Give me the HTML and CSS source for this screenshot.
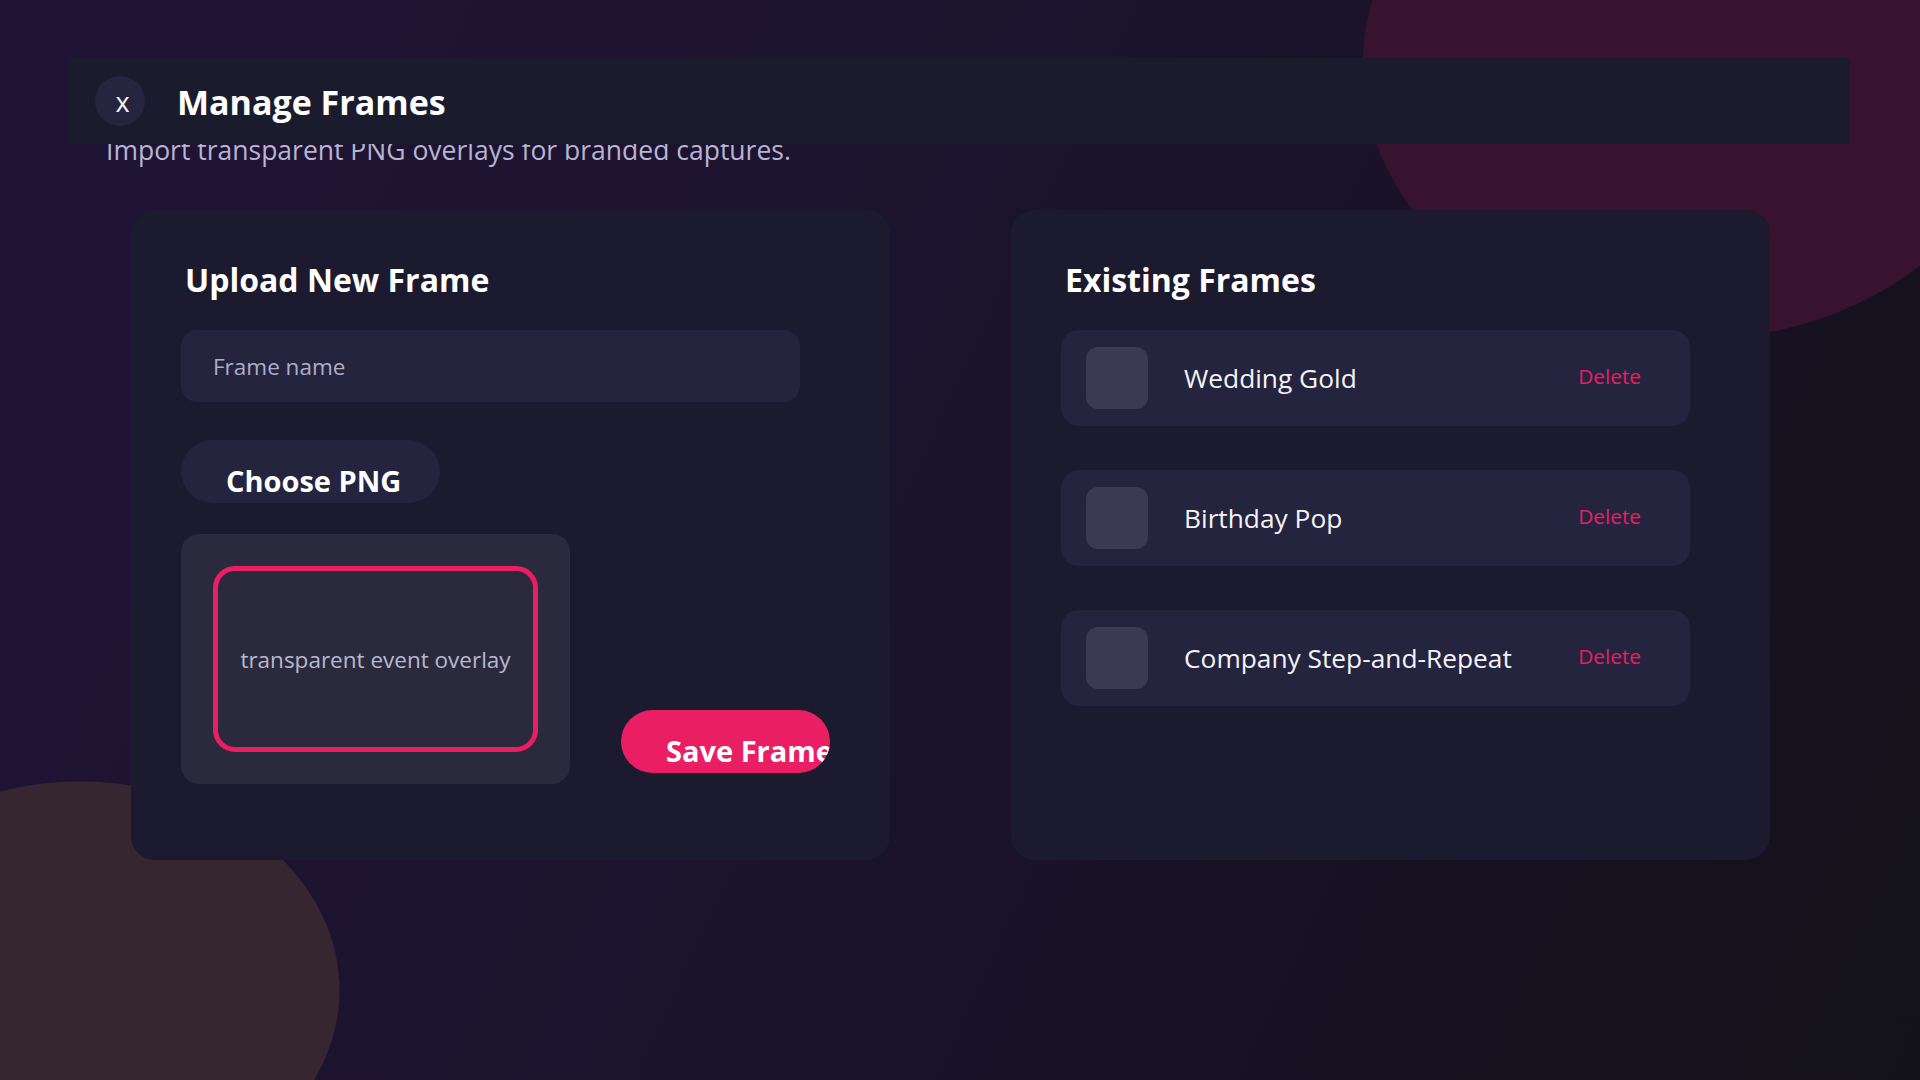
FILE: index.html
```html
<!DOCTYPE html>
<html lang="en">
<head>
    <meta charset="UTF-8">
    <meta name="viewport" content="width=device-width, initial-scale=1.0">
    <title>Manage Frames</title>
    <link rel="stylesheet" href="styles.css">
</head>
<body>

    <div class="page">
        <!-- Top bar -->
        <header class="topbar">
            <button class="close-btn">x</button>
            <h1>Manage Frames</h1>
        </header>
        <p class="subtitle">Import transparent PNG overlays for branded captures.</p>

        <div class="panels">
            <!-- Upload form -->
            <section class="panel">
                <h2>Upload New Frame</h2>
                <input class="name-input" type="text" placeholder="Frame name">
                <button class="choose-btn">Choose PNG</button>
                <div class="preview-row">
                    <div class="preview">
                        <div class="preview-inner">transparent event overlay</div>
                    </div>
                    <button class="save-btn">Save Frame</button>
                </div>
            </section>

            <!-- Existing frames list -->
            <section class="panel">
                <h2>Existing Frames</h2>
                <ul class="frame-list">
                    <li class="frame-item">
                        <span class="thumb"></span>
                        <span class="frame-name">Wedding Gold</span>
                        <button class="delete-btn">Delete</button>
                    </li>
                    <li class="frame-item">
                        <span class="thumb"></span>
                        <span class="frame-name">Birthday Pop</span>
                        <button class="delete-btn">Delete</button>
                    </li>
                    <li class="frame-item">
                        <span class="thumb"></span>
                        <span class="frame-name">Company Step-and-Repeat</span>
                        <button class="delete-btn">Delete</button>
                    </li>
                </ul>
            </section>
        </div>
    </div>

</body>
</html>
```

FILE: styles.css
```css
body {
    font-family: "Open Sans", "Noto Sans", sans-serif;
    margin: 0;
    height: 100vh;
    overflow: hidden;
    color: #ffffff;
    background-color: #1a1229;
    /* decorative blobs + base gradient */
    background-image:
        radial-gradient(332px 275px at 1694px 65px, #38132f 99.5%, rgba(56, 19, 47, 0) 100%),
        radial-gradient(260px 209px at 80px 990px, #352630 99.5%, rgba(53, 38, 48, 0) 100%),
        linear-gradient(115deg, #201435 0%, #1b132c 50%, #131119 100%);
}

.page {
    padding: 58px 70px 0;
}

/* Top bar */
.topbar {
    position: relative;
    z-index: 1;
    height: 86px;
    background-color: #1b1b2e;
    display: flex;
    align-items: center;
    padding-left: 25px;
}

.close-btn {
    width: 50px;
    height: 50px;
    border-radius: 50%;
    border: none;
    background-color: #26253f;
    color: #f2f2f7;
    font-family: inherit;
    font-size: 27px;
    line-height: 1;
    padding: 0 0 0 5px;
    cursor: pointer;
}

.topbar h1 {
    margin: 2px 0 0 32px;
    font-size: 34px;
    font-weight: 700;
}

.subtitle {
    margin: -12px 0 0 36px;
    font-size: 26.5px;
    color: #b6b6d2;
}

/* Panels */
.panels {
    display: grid;
    grid-template-columns: 759px 759px;
    gap: 121px;
    margin: 42px 0 0 61px;
}

.panel {
    height: 650px;
    box-sizing: border-box;
    background-color: #1b1a2e;
    border-radius: 24px;
    padding: 48px 50px 0;
}

.panel h2 {
    margin: 0 0 29px;
    padding-left: 4px;
    font-size: 32px;
    font-weight: 700;
}

.name-input {
    display: block;
    width: 619px;
    height: 72px;
    box-sizing: border-box;
    border: none;
    border-radius: 16px;
    background-color: #25243f;
    padding: 0 32px;
    font-family: inherit;
    font-size: 22.5px;
    color: #ffffff;
    outline: none;
}

.name-input::placeholder {
    color: #aeaec8;
}

.choose-btn, .save-btn {
    display: block;
    height: 63px;
    box-sizing: border-box;
    border: none;
    border-radius: 32px;
    padding: 18px 0 0 45px;
    text-align: left;
    white-space: nowrap;
    overflow: hidden;
    font-family: inherit;
    font-size: 29px;
    font-weight: 700;
    line-height: normal;
    color: #ffffff;
    cursor: pointer;
}

.choose-btn {
    width: 259px;
    margin-top: 38px;
    background-color: #25243f;
}

.preview-row {
    display: flex;
    align-items: flex-end;
    gap: 51px;
    margin-top: 31px;
}

.preview {
    width: 389px;
    height: 250px;
    box-sizing: border-box;
    padding: 32px;
    border-radius: 18px;
    background-color: #2a2a3c;
}

.preview-inner {
    height: 100%;
    box-sizing: border-box;
    border: 5px solid #e91e63;
    border-radius: 22px;
    display: flex;
    align-items: center;
    justify-content: center;
    font-size: 22.5px;
    color: #b8b8d0;
}

.save-btn {
    width: 209px;
    margin-bottom: 11px;
    background-color: #e91e63;
}

/* Existing frames */
.frame-list {
    list-style: none;
    margin: 0;
    padding: 0;
    display: flex;
    flex-direction: column;
    gap: 44px;
}

.frame-item {
    width: 629px;
    height: 96px;
    box-sizing: border-box;
    display: flex;
    align-items: center;
    padding: 0 49px 0 25px;
    border-radius: 18px;
    background-color: #25243f;
}

.thumb {
    width: 62px;
    height: 62px;
    border-radius: 12px;
    background-color: #3b3a55;
}

.frame-name {
    flex: 1;
    margin-left: 36px;
    font-size: 26.3px;
    color: #f4f4f8;
}

.delete-btn {
    border: none;
    background: none;
    padding: 0;
    margin-bottom: 5px;
    font-family: inherit;
    font-size: 20.8px;
    color: #e91e63;
    cursor: pointer;
}
```
